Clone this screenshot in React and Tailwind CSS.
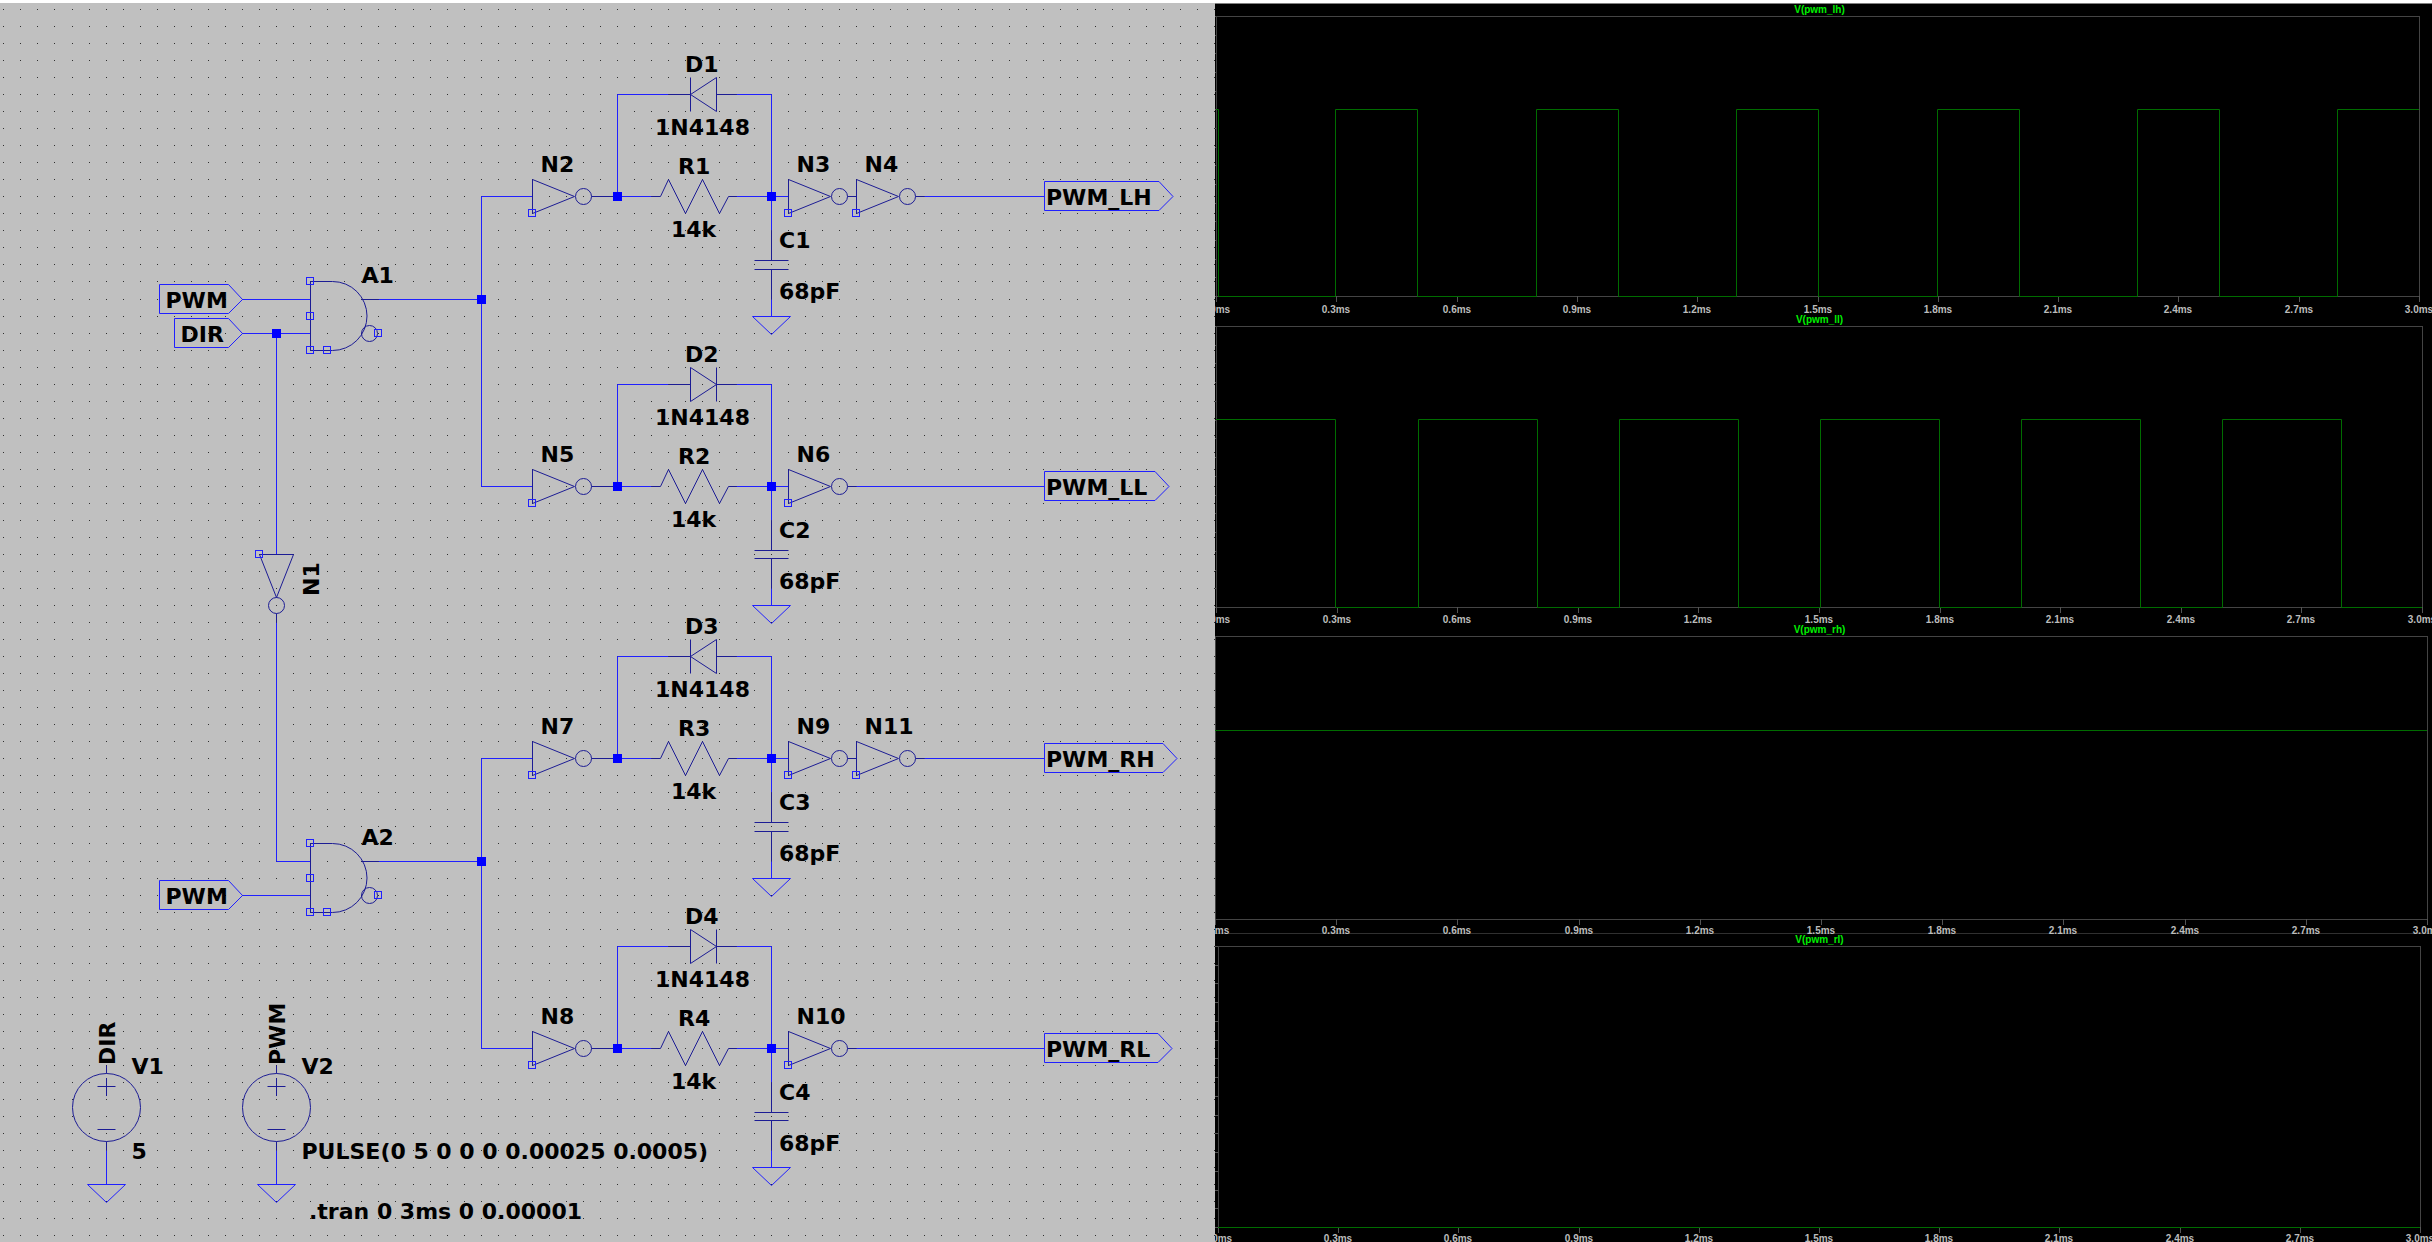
const WIRE = "#2020ff";
const PART = "#1c1c94";

// Schematic grid to canvas coordinates
const gx = (k) => Math.floor(3.8 + 17.05 * k) + 0.5;
const gy = (k) => Math.floor(9.5 + 17.03 * k) + 0.5;

const pts = (list) => list.map(([x, y]) => `${gx(x)},${gy(y)}`).join(" ");

function gridDots() {
  let d = "";
  for (let i = 0; i <= 71; i++) {
    for (let j = 0; j <= 72; j++) d += `M${gx(i) - 0.5} ${gy(j)}h1`;
  }
  return d;
}
const DOTS = gridDots();

const Wire = ({ p }) => <polyline points={pts(p)} fill="none" stroke={WIRE} />;
const Lead = ({ p }) => <polyline points={pts(p)} fill="none" stroke={PART} />;

const Node = ({ x, y }) => (
  <rect x={gx(x) - 4.5} y={gy(y) - 4.5} width="9" height="9" fill="#0000ff" />
);
const Pin = ({ x, y }) => (
  <rect x={gx(x) - 4} y={gy(y) - 4} width="7" height="7" fill="none" stroke={WIRE} />
);
const Label = ({ x, y, children }) => (
  <text x={x} y={y} fill="#000">{children}</text>
);
const VLabel = ({ x, y, children }) => (
  <text transform={`translate(${x} ${y}) rotate(-90)`} fill="#000">{children}</text>
);

function Inverter({ x, y, name }) {
  return (
    <g>
      <polygon points={pts([[x, y - 1], [x + 2.5, y], [x, y + 1]])} fill="none" stroke={PART} />
      <circle cx={gx(x + 3)} cy={gy(y)} r="8" fill="none" stroke={PART} />
      <Pin x={x} y={y + 1} />
      <Label x={gx(x) + 8} y={gy(y) - 25}>{name}</Label>
    </g>
  );
}

function Diode({ y, name, reverse }) {
  const a = 690.5;
  const b = 716.5;
  const tri = reverse
    ? `${b},${gy(y - 1)} ${a},${gy(y)} ${b},${gy(y + 1)}`
    : `${a},${gy(y - 1)} ${b},${gy(y)} ${a},${gy(y + 1)}`;
  const bar = reverse ? a : b;
  return (
    <g fill="none" stroke={PART}>
      <path d={`M${gx(39)} ${gy(y)}H${a}M${b} ${gy(y)}H${gx(43)}M${bar} ${gy(y - 1)}V${gy(y + 1)}`} />
      <polygon points={tri} />
      <g stroke="none">
        <Label x={685} y={gy(y) - 23}>{name}</Label>
        <Label x={655} y={gy(y) + 40}>1N4148</Label>
      </g>
    </g>
  );
}

function Ground({ x, y }) {
  const cx = gx(x);
  const cy = gy(y);
  return <polygon points={`${cx - 19},${cy} ${cx + 19},${cy} ${cx},${cy + 18}`} fill="none" stroke={WIRE} />;
}

function Capacitor({ y, name }) {
  return (
    <g>
      <path
        d={`M${gx(45)} ${gy(y + 2)}V${gy(y + 3.75)}M${gx(44)} ${gy(y + 3.75)}H${gx(46)}M${gx(44)} ${gy(y + 4.25)}H${gx(46)}M${gx(45)} ${gy(y + 4.25)}V${gy(y + 6)}`}
        fill="none"
        stroke={PART}
      />
      <Wire p={[[45, y + 6], [45, y + 7]]} />
      <Ground x={45} y={y + 7} />
      <Label x={779} y={gy(y) + 51}>{name}</Label>
      <Label x={779} y={gy(y) + 102}>68pF</Label>
    </g>
  );
}

function Stage({ y, inv, diode, res, cap, out, second, tag, tip, reverse }) {
  return (
    <g>
      <Wire p={[[28, y], [31, y]]} />
      <Inverter x={31} y={y} name={inv} />
      <path d={`M${gx(34) + 8} ${gy(y)}H${gx(36)}`} stroke={PART} />
      <Wire p={[[39, y - 6], [36, y - 6], [36, y], [38, y]]} />
      <Wire p={[[43, y - 6], [45, y - 6], [45, y + 2]]} />
      <Wire p={[[43, y], [46, y]]} />
      <Diode y={y - 6} name={diode} reverse={reverse} />
      <Lead
        p={[[38, y], [38.5, y], [39, y - 1], [40, y + 1], [41, y - 1], [42, y + 1], [42.5, y], [43, y]]}
      />
      <Label x={678} y={gy(y) - 23}>{res}</Label>
      <Label x={671} y={gy(y) + 40}>14k</Label>
      <Capacitor y={y} name={cap} />
      <Inverter x={46} y={y} name={out} />
      {second && (
        <>
          <path d={`M${gx(49) + 8} ${gy(y)}H${gx(50)}`} stroke={PART} />
          <Inverter x={50} y={y} name={second} />
        </>
      )}
      <path d={`M${gx(second ? 53 : 49) + 8} ${gy(y)}H${gx(second ? 54 : 50)}`} stroke={PART} />
      <path d={`M${gx(second ? 54 : 50)} ${gy(y)}H1044`} stroke={WIRE} />
      <path
        d={`M1044.5 ${gy(y) - 15}H${tip - 14}L${tip} ${gy(y)}L${tip - 14} ${gy(y) + 14}H1044.5Z`}
        fill="none"
        stroke={WIRE}
      />
      <Label x={1046} y={gy(y) + 8}>{tag}</Label>
      <Node x={36} y={y} />
      <Node x={45} y={y} />
    </g>
  );
}

function AndGate({ x, y, name }) {
  const cx = gx(x) + 22;
  return (
    <g>
      <path
        d={`M${gx(x)} ${gy(y)}H${cx}A34 34 0 0 1 ${cx} ${gy(y + 4)}H${gx(x)}Z`}
        fill="none"
        stroke={PART}
      />
      <circle cx={gx(x) + 59} cy={gy(y + 3)} r="8" fill="none" stroke={PART} />
      <path d={`M${gx(x) + 51} ${gy(y + 1)}H${gx(x + 4)}`} stroke={PART} />
      <Pin x={x} y={y} />
      <Pin x={x} y={y + 2} />
      <Pin x={x} y={y + 4} />
      <Pin x={x + 1} y={y + 4} />
      <Pin x={x + 4} y={y + 3} />
      <Label x={gx(x) + 51} y={gy(y) + 1}>{name}</Label>
    </g>
  );
}

function InputTag({ y, width, name }) {
  const tip = gx(14);
  const cy = gy(y);
  return (
    <g>
      <path
        d={`M${tip - width} ${cy - 15}H${tip - 14}L${tip} ${cy}L${tip - 14} ${cy + 14}H${tip - width}Z`}
        fill="none"
        stroke={WIRE}
      />
      <Label x={tip - width + 6} y={cy + 8}>{name}</Label>
    </g>
  );
}

function Source({ x, name, net, value }) {
  const cx = gx(x);
  return (
    <g>
      <g fill="none" stroke={PART}>
        <path d={`M${cx} ${gy(62)}V${gy(62.5)}M${cx - 9} 1086.5h18M${cx} 1078v18M${cx - 9} 1129.5h18M${cx} ${gy(66.5)}V${gy(67)}`} />
        <circle cx={cx} cy={gy(64.5)} r="34" />
      </g>
      <Wire p={[[x, 67], [x, 69]]} />
      <Ground x={x} y={69} />
      <VLabel x={cx + 8} y={1065}>{net}</VLabel>
      <Label x={cx + 25} y={1074}>{name}</Label>
      <Label x={cx + 25} y={1159}>{value}</Label>
    </g>
  );
}

function Schematic() {
  return (
    <svg
      viewBox="0 3 1215 1239"
      className="block w-full bg-[#c0c0c0] font-['DejaVu_Sans',sans-serif] text-[22px] font-bold"
      role="img"
      aria-label="PWM dead-time circuit"
    >
      <path d={DOTS} stroke="#303030" />
      <Wire p={[[14, 17], [18, 17]]} />
      <Wire p={[[14, 19], [18, 19]]} />
      <Wire p={[[16, 19], [16, 32]]} />
      <Wire p={[[16, 36], [16, 50], [18, 50]]} />
      <Wire p={[[14, 52], [18, 52]]} />
      <Wire p={[[22, 17], [28, 17]]} />
      <Wire p={[[22, 50], [28, 50]]} />
      <Wire p={[[28, 11], [28, 28]]} />
      <Wire p={[[28, 44], [28, 61]]} />

      <InputTag y={17} width={83} name="PWM" />
      <InputTag y={19} width={68} name="DIR" />
      <InputTag y={52} width={83} name="PWM" />
      <AndGate x={18} y={16} name="A1" />
      <AndGate x={18} y={49} name="A2" />

      <polygon points={pts([[15, 32], [17, 32], [16, 34.5]])} fill="none" stroke={PART} />
      <circle cx={gx(16)} cy={gy(35)} r="8" fill="none" stroke={PART} />
      <path d={`M${gx(16)} ${gy(35) + 8}V${gy(36)}`} stroke={PART} />
      <Pin x={15} y={32} />
      <VLabel x={319} y={596}>N1</VLabel>

      <Stage y={11} inv="N2" diode="D1" res="R1" cap="C1" out="N3" second="N4" tag="PWM_LH" tip={1173} reverse />
      <Stage y={28} inv="N5" diode="D2" res="R2" cap="C2" out="N6" tag="PWM_LL" tip={1169} />
      <Stage y={44} inv="N7" diode="D3" res="R3" cap="C3" out="N9" second="N11" tag="PWM_RH" tip={1177} reverse />
      <Stage y={61} inv="N8" diode="D4" res="R4" cap="C4" out="N10" tag="PWM_RL" tip={1172} />

      <Node x={28} y={17} />
      <Node x={16} y={19} />
      <Node x={28} y={50} />

      <Source x={6} name="V1" net="DIR" value="5" />
      <Source x={16} name="V2" net="PWM" value="PULSE(0 5 0 0 0 0.00025 0.0005)" />
      <Label x={309} y={1219}>.tran 0 3ms 0 0.00001</Label>
    </svg>
  );
}

const PLOTS = [
  {
    title: "V(pwm_lh)", left: 1, right: 1204, base: 280, height: 298, textY: 297, high: 93,
    start: true, edges: [3, 120, 202, 321, 403, 521, 603, 722, 804, 922, 1004, 1122],
  },
  {
    title: "V(pwm_ll)", left: 1, right: 1207, base: 281, height: 298, textY: 297, high: 93,
    start: true, edges: [120, 203, 322, 404, 523, 605, 724, 806, 925, 1007, 1126],
  },
  {
    title: "V(pwm_rh)", left: 0, right: 1212, base: 283, height: 298, textY: 298, high: 94,
    start: true, edges: [], divider: true,
  },
  {
    title: "V(pwm_rl)", left: 3, right: 1205, base: 281, height: 296, textY: 296, high: 93,
    start: false, edges: [],
  },
];

function tracePath({ left, right, base, high, start, edges }) {
  let up = start;
  const level = () => (up ? high : base) + 0.5;
  let d = `M${left} ${level()}`;
  for (const e of edges) {
    d += `H${e + 0.5}`;
    up = !up;
    d += `V${level()}`;
  }
  return d + `H${right}`;
}

function Plot(plot) {
  const { title, left, right, base, height, textY, divider } = plot;
  const ticks = Array.from({ length: 11 }, (_, i) => Math.round(left + ((right - left) * i) / 10));
  const rows = Array.from({ length: 16 }, (_, i) => Math.round((base * i) / 15));
  return (
    <figure className="flex flex-col">
      <figcaption className="h-3 pr-2 text-center text-[10px] leading-3 font-bold text-[#00f000]">
        {title}
      </figcaption>
      <svg viewBox={`0 0 1217 ${height}`} className="block w-full overflow-visible text-[10px] font-bold">
        <rect x={left + 0.5} y="0.5" width={right - left} height={base} fill="none" stroke="#444444" />
        <path
          d={ticks.map((t) => `M${t + 0.5} ${base}v6`).join("") + rows.map((r) => `M0 ${r + 0.5}h${left}`).join("")}
          stroke="#545454"
        />
        {divider && <path d={`M0 ${height - 0.5}H1217`} stroke="#303030" />}
        <path d={tracePath(plot)} fill="none" stroke="#006c00" />
        {ticks.map((t, i) => (
          <text key={i} x={t} y={textY} textAnchor="middle" fill="#bcbcbc">
            {(i * 0.3).toFixed(1)}ms
          </text>
        ))}
      </svg>
    </figure>
  );
}

export default function App() {
  return (
    <div className="bg-white pt-[3px] font-['Liberation_Sans',Arial,sans-serif]">
      <main className="grid grid-cols-[1215fr_1217fr] bg-black">
        <Schematic />
        <section className="flex flex-col overflow-hidden border-t border-[#808080] bg-black">
          {PLOTS.map((p) => (
            <Plot key={p.title} {...p} />
          ))}
        </section>
      </main>
    </div>
  );
}
